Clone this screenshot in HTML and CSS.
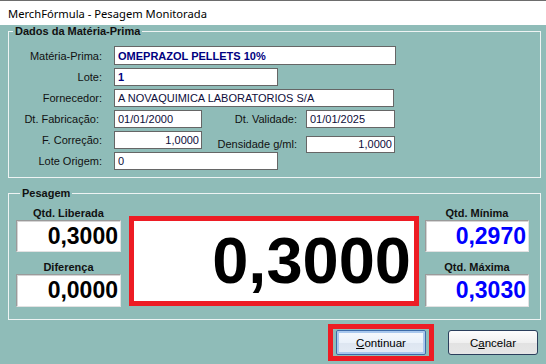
FILE: index.html
```html
<!DOCTYPE html>
<html lang="pt-BR">
<head>
    <meta charset="UTF-8">
    <meta name="viewport" content="width=device-width, initial-scale=1.0">
    <title>Pesagem Monitorada</title>
    <link rel="stylesheet" href="styles.css">
</head>
<body>
    <div class="titlebar">MerchFórmula - Pesagem Monitorada</div>

    <div class="content">
        <fieldset class="group group-dados">
            <legend>Dados da Matéria-Prima</legend>

            <div class="row row-first">
                <label class="label">Matéria-Prima:</label>
                <input class="field field-wide strong" type="text" value="OMEPRAZOL PELLETS 10%" readonly>
            </div>

            <div class="row">
                <label class="label">Lote:</label>
                <input class="field field-mid strong" type="text" value="1" readonly>
            </div>

            <div class="row">
                <label class="label">Fornecedor:</label>
                <input class="field field-forn" type="text" value="A NOVAQUIMICA LABORATORIOS S/A" readonly>
            </div>

            <div class="row">
                <label class="label label-fab">Dt. Fabricação:</label>
                <input class="field field-short" type="text" value="01/01/2000" readonly>
                <label class="label2">Dt. Validade:</label>
                <input class="field field-right" type="text" value="01/01/2025" readonly>
            </div>

            <div class="row">
                <label class="label">F. Correção:</label>
                <input class="field field-short num" type="text" value="1,0000" readonly>
                <div class="shifted">
                    <label class="label2">Densidade g/ml:</label>
                    <input class="field field-right num" type="text" value="1,0000" readonly>
                </div>
            </div>

            <div class="row">
                <label class="label">Lote Origem:</label>
                <input class="field field-mid" type="text" value="0" readonly>
            </div>
        </fieldset>

        <fieldset class="group group-pesagem">
            <legend>Pesagem</legend>

            <div class="weigh">
                <div class="qty-col">
                    <div class="qty-label">Qtd. Liberada</div>
                    <div class="qty-box">0,3000</div>
                    <div class="qty-label qty-label-second">Diferença</div>
                    <div class="qty-box qty-box-second">0,0000</div>
                </div>

                <div class="display">0,3000</div>

                <div class="qty-col qty-col-right">
                    <div class="qty-label">Qtd. Mínima</div>
                    <div class="qty-box blue">0,2970</div>
                    <div class="qty-label qty-label-second">Qtd. Máxima</div>
                    <div class="qty-box qty-box-second blue">0,3030</div>
                </div>
            </div>
        </fieldset>

        <div class="actions">
            <div class="highlight">
                <button class="btn btn-default"><u>C</u>ontinuar</button>
            </div>
            <button class="btn">C<u>a</u>ncelar</button>
        </div>
    </div>
</body>
</html>
```

FILE: styles.css
```css
body {
    margin: 0;
    padding: 0;
    width: 546px;
    height: 364px;
    overflow: hidden;
    background-color: #8fbcb8;
    font-family: 'Liberation Sans', Arial, sans-serif;
    font-size: 11px;
    color: #111;
}

.titlebar {
    height: 24px;
    line-height: 25px;
    padding-left: 8px;
    background-color: #fff;
    border-top: 1px solid #6d6d6d;
    font-family: 'Noto Sans', sans-serif;
    font-size: 11.2px;
    color: #000;
}

.content {
    padding: 0 5px 0 8px;
}

/* Caixas de grupo */
.group {
    margin: 0;
    padding: 0;
    min-width: 0;
    border: 1px solid #eef3f3;
}

.group legend {
    margin-left: 4px;
    padding: 0 2px;
    line-height: 13px;
    font-weight: bold;
    color: #111;
}

.group-dados {
    padding: 8px 0 7px 0;
}

.group-pesagem {
    margin-top: 9px;
    padding: 6px 11px 12px 7px;
}

/* Linhas do formulário */
.row {
    display: flex;
    align-items: center;
    height: 18px;
    margin-top: 3px;
}

.row-first {
    height: 19px;
    margin-top: 0;
    margin-bottom: 3px;
}

.label {
    width: 93px;
    margin-right: 12px;
    text-align: right;
}

.label-fab {
    width: 90px;
    padding-right: 3px;
}

.label2 {
    width: 95px;
    margin-right: 9px;
    text-align: right;
}

.shifted {
    display: flex;
    align-items: center;
    margin-top: 8px;
}

.field {
    box-sizing: border-box;
    height: 100%;
    margin: 0;
    padding: 0 3px;
    border: 1px solid #666;
    background-color: #fff;
    font-family: 'Liberation Sans', Arial, sans-serif;
    font-size: 11px;
    color: #0d0d3a;
    outline: none;
}

.shifted .field {
    height: 17px;
}

.field.strong {
    font-weight: bold;
    color: #000080;
}

.field.num {
    text-align: right;
    padding-right: 2px;
}

.field-wide {
    width: 282px;
}

.field-forn {
    width: 280px;
}

.field-mid {
    width: 164px;
}

.field-short {
    width: 88px;
}

.field-right {
    width: 89px;
}

/* Pesagem */
.weigh {
    display: flex;
    align-items: flex-start;
}

.qty-col {
    width: 105px;
    margin-right: 8px;
}

.qty-col-right {
    width: 104px;
    margin-right: 0;
    margin-left: 6px;
}

.qty-label {
    height: 14px;
    line-height: 14px;
    text-align: center;
    font-weight: bold;
    color: #111;
}

.qty-label-second {
    margin-top: 8px;
}

.qty-box {
    box-sizing: border-box;
    height: 32px;
    padding-right: 2px;
    background-color: #fff;
    border-style: solid;
    border-width: 1px;
    border-color: #9a9a9a #e2e2e2 #e2e2e2 #9a9a9a;
    box-shadow: inset 1px 1px 0 #d4d4d4;
    text-align: right;
    font-size: 23px;
    line-height: 31px;
    font-weight: bold;
    color: #000;
}

.qty-box-second {
    height: 33px;
}

.qty-box.blue {
    color: #0000ff;
}

.display {
    box-sizing: border-box;
    width: 290px;
    height: 90px;
    margin-top: 10px;
    padding-right: 3px;
    border: 5px solid #ed1c24;
    background-color: #fff;
    text-align: right;
    font-size: 65px;
    line-height: 80px;
    font-weight: bold;
    color: #000;
}

/* Botões */
.actions {
    display: flex;
    justify-content: flex-end;
    align-items: center;
    padding: 4px 3px 0 0;
}

.highlight {
    display: flex;
    padding: 1px 3px;
    border: 5px solid #ed1c24;
    margin-right: 14px;
}

.btn {
    box-sizing: border-box;
    width: 90px;
    height: 25px;
    padding: 0;
    border: 1px solid #2b3f5c;
    border-radius: 3px;
    background: linear-gradient(#fdfdfd 0%, #f0f0f0 50%, #e2e2e2 51%, #e6e6e6 100%);
    font-family: 'Liberation Sans', Arial, sans-serif;
    font-size: 11.5px;
    color: #000;
}

.btn-default {
    border-radius: 2px;
    border-color: #3c6aa8;
    box-shadow: inset 0 0 0 2px #a9c8ee;
    background: linear-gradient(#f6f9fd 0%, #eaf1fa 50%, #dde6f1 51%, #e4ebf4 100%);
}

.btn u {
    text-decoration: underline;
}
```
